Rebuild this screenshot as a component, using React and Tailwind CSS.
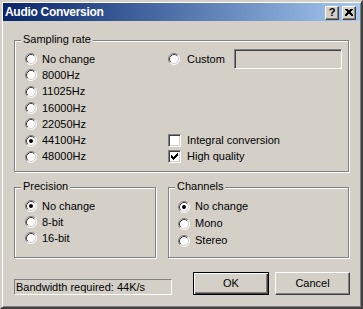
import React from 'react';

const Radio = ({ checked }) => (
  <svg width="12" height="12" viewBox="0 0 12 12" className="shrink-0">
    <circle cx="6" cy="6" r="5" fill="white" />
    <path d="M2.11 9.89 A5.5 5.5 0 0 1 9.89 2.11" stroke="#808080" fill="none" />
    <path d="M2.82 9.18 A4.5 4.5 0 0 1 9.18 2.82" stroke="#404040" fill="none" />
    <path d="M9.89 2.11 A5.5 5.5 0 0 1 2.11 9.89" stroke="#ffffff" fill="none" />
    <path d="M9.18 2.82 A4.5 4.5 0 0 1 2.82 9.18" stroke="#d4d0c8" fill="none" />
    {checked && <circle cx="6" cy="6" r="2" fill="black" />}
  </svg>
);

const checkCols = [2, 3, 4, 3, 2, 1, 0];

const Checkbox = ({ checked }) => (
  <div className="w-[13px] h-[13px] shrink-0 bg-white border border-t-[#808080] border-l-[#808080] border-r-white border-b-white shadow-[inset_1px_1px_0_#404040,inset_-1px_-1px_0_#d4d0c8]">
    {checked && (
      <svg width="11" height="11" viewBox="0 0 11 11" shapeRendering="crispEdges">
        {checkCols.map((y, i) => (
          <rect key={i} x={i + 2} y={y + 2} width="1" height="3" fill="black" />
        ))}
      </svg>
    )}
  </div>
);

const RadioRow = ({ label, checked, h = 'h-[16px]' }) => (
  <div className={`flex items-center gap-[5px] ${h}`}>
    <Radio checked={checked} />
    <span>{label}</span>
  </div>
);

const Group = ({ label, className, children }) => (
  <div
    className={`relative border border-[#808080] shadow-[1px_1px_0_#ffffff,inset_1px_1px_0_#ffffff] ${className}`}
  >
    <span className="absolute left-[6px] top-[-8px] bg-[#d4d0c8] px-[2px] leading-[13px]">{label}</span>
    {children}
  </div>
);

const TitleButton = ({ children }) => (
  <div className="w-[14px] h-[14px] flex items-center justify-center bg-[#d4d0c8] border border-t-white border-l-white border-r-[#404040] border-b-[#404040] shadow-[inset_-1px_-1px_0_#808080] text-black text-[11px] font-bold leading-none">
    {children}
  </div>
);

export default function App() {
  return (
    <div className="w-[363px] h-[309px] bg-[#d4d0c8] border-2 border-t-[#d4d0c8] border-l-[#d4d0c8] border-r-[#404040] border-b-[#404040] shadow-[inset_1px_1px_0_#ffffff,inset_-1px_-1px_0_#808080] p-[1px] font-['Liberation_Sans',Arial,sans-serif] text-[11px] text-black leading-[13px]">
      {/* title bar */}
      <div className="h-[18px] flex items-center justify-between pl-[2px] pr-[4px] bg-gradient-to-r from-[#0a246a] to-[#a6caf0]">
        <span className="text-white font-bold text-[12px] tracking-[-0.3px]">Audio Conversion</span>
        <div className="flex items-center gap-[3px] mt-[1px]">
          <TitleButton>?</TitleButton>
          <TitleButton>
            <svg width="8" height="7" viewBox="0 0 8 7" shapeRendering="crispEdges">
              <path d="M0.5 0 L7.5 7 M1.5 0 L8.5 7 M7.5 0 L0.5 7 M6.5 0 L-0.5 7" stroke="black" strokeWidth="1" />
            </svg>
          </TitleButton>
        </div>
      </div>

      <div className="px-[11px]">
        {/* Sampling rate */}
        <Group label="Sampling rate" className="mt-[19px] h-[132px] pt-[10px] pl-[10px] pr-[6px] flex">
          <div className="w-[143px]">
            <RadioRow label="No change" h="h-[16.3px]" />
            <RadioRow label="8000Hz" h="h-[16.3px]" />
            <RadioRow label="11025Hz" h="h-[16.3px]" />
            <RadioRow label="16000Hz" h="h-[16.3px]" />
            <RadioRow label="22050Hz" h="h-[16.3px]" />
            <RadioRow label="44100Hz" checked h="h-[16.3px]" />
            <RadioRow label="48000Hz" h="h-[16.3px]" />
          </div>
          <div className="flex-1 flex flex-col h-[114px]">
            <div className="flex items-center h-[16.3px]">
              <Radio />
              <span className="ml-[7px] w-[47px]">Custom</span>
              <div className="w-[108px] h-[20px] border border-t-[#808080] border-l-[#808080] border-r-white border-b-white shadow-[inset_1px_1px_0_#404040,inset_-1px_-1px_0_#d4d0c8]" />
            </div>
            <div className="flex-1" />
            <div className="flex items-center gap-[6px] h-[16.3px]">
              <Checkbox />
              <span>Integral conversion</span>
            </div>
            <div className="flex items-center gap-[6px] h-[16.3px]">
              <Checkbox checked />
              <span>High quality</span>
            </div>
          </div>
        </Group>

        {/* Precision / Channels */}
        <div className="flex gap-[12px] mt-[15px]">
          <Group label="Precision" className="w-[142px] h-[71px] pt-[10px] pl-[10px]">
            <RadioRow label="No change" checked />
            <RadioRow label="8-bit" />
            <RadioRow label="16-bit" />
          </Group>
          <Group label="Channels" className="flex-1 h-[71px] pt-[10px] pl-[9px]">
            <RadioRow label="No change" checked h="h-[17px]" />
            <RadioRow label="Mono" h="h-[17px]" />
            <RadioRow label="Stereo" h="h-[17px]" />
          </Group>
        </div>

        {/* bottom row */}
        <div className="flex items-end mt-[14px] -mr-[1px]">
          <div className="w-[158px] h-[16px] flex items-center pl-[1px] border border-t-[#808080] border-l-[#808080] border-r-white border-b-white">
            Bandwidth required: 44K/s
          </div>
          <div className="flex-1" />
          <button className="w-[76px] h-[23px] bg-[#d4d0c8] border border-black shadow-[inset_1px_1px_0_#ffffff,inset_-1px_-1px_0_#404040,inset_-2px_-2px_0_#808080] text-[11px]">
            OK
          </button>
          <button className="ml-[6px] w-[75px] h-[23px] bg-[#d4d0c8] border border-t-white border-l-white border-r-[#404040] border-b-[#404040] shadow-[inset_-1px_-1px_0_#808080] text-[11px]">
            Cancel
          </button>
        </div>
      </div>
    </div>
  );
}
